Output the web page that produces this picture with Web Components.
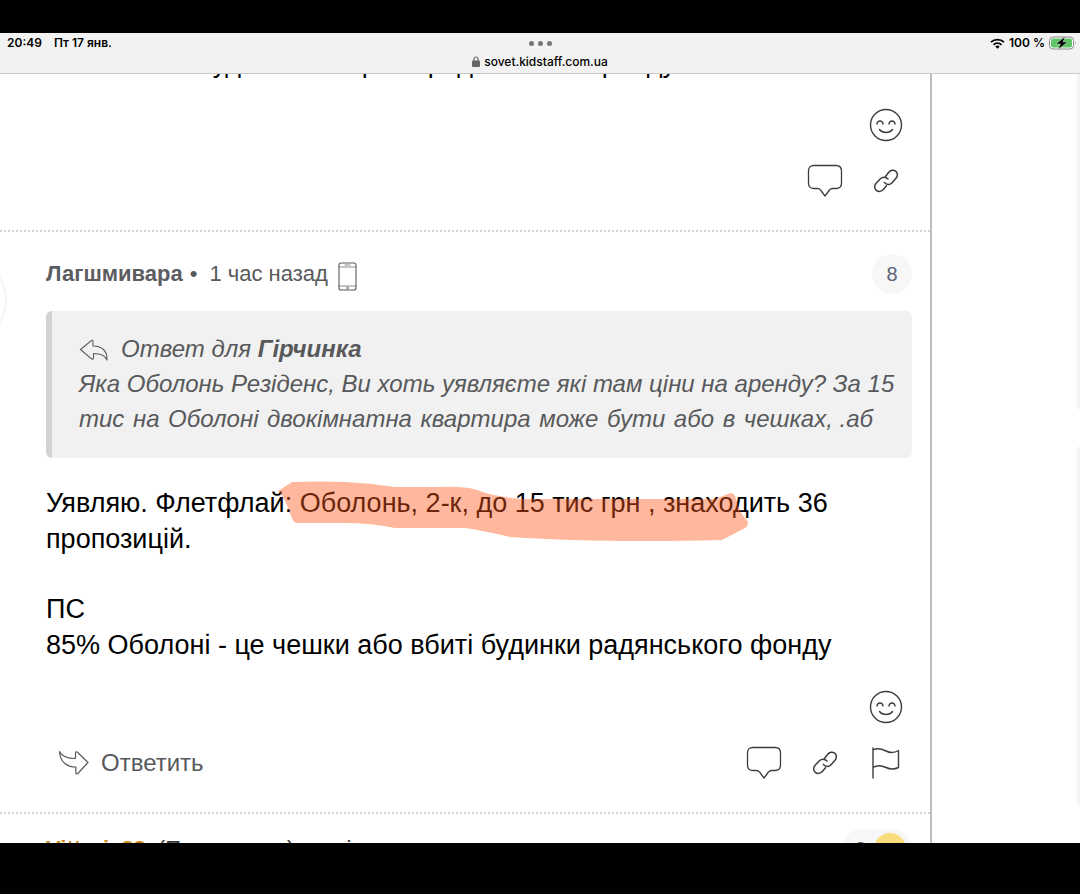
<!DOCTYPE html>
<html lang="uk">
<head>
<meta charset="utf-8">
<meta name="viewport" content="width=device-width, initial-scale=1">
<title>sovet.kidstaff.com.ua</title>
<style>
  html, body { margin: 0; height: 100%; }
  body { background: #000; color: #000; font-family: "Liberation Sans", Arial, sans-serif; }
  .tail { display: inline-block; text-align-last: left; }
</style>
</head>
<body>
<tablet-screen>
  <status-bar slot="top" time="20:49" date="Пт 17 янв." host="sovet.kidstaff.com.ua" battery="100 %"></status-bar>
  <forum-comment class="scrolled">
    <p>Неможливо судити нам про середній чек в оренду</p>
    <comment-actions slot="actions"></comment-actions>
  </forum-comment>
  <forum-comment avatar>
    <comment-head slot="head" author="Лагшмивара" time="1 час назад" votes="8" mobile></comment-head>
    <reply-quote slot="quote" to="Гірчинка">
      <span>Яка Оболонь Резіденс, Ви хоть уявляєте які там ціни на аренду? За 15</span>
      <span>тис на Оболоні двокімнатна квартира може бути або в <span class="tail">чешках, .аб</span></span>
    </reply-quote>
    <p>Уявляю. Флетфлай: <marker-stroke>Оболонь, 2-к, до 15 тис грн , знаходить</marker-stroke> 36 пропозицій.</p>
    <p>ПС<br>85% Оболоні - це чешки або вбиті будинки радянського фонду</p>
    <comment-actions slot="actions" reply flag></comment-actions>
  </forum-comment>
  <forum-comment avatar compact>
    <comment-head slot="head" author="Vittoria88" extra="(Пнша назва) лоскі" votes="8" gold></comment-head>
  </forum-comment>
  <side-cards slot="side"></side-cards>
</tablet-screen>

<script>
const define = (name, render) => customElements.define(name, class extends HTMLElement {
  constructor() { super(); this.attachShadow({ mode: "open" }); }
  connectedCallback() { this.shadowRoot.innerHTML = render(this); }
});

const ICONS = {
  smile: [34, 34, `<circle cx="17" cy="17" r="15.5"/><path d="M8 16c.5-4 5.500-4 6 0M20 16c.5-4 5.500-4 6 0M10.500 21.500c3 4 10 4 13 0"/>`],
  bubble: [36, 34, `<path d="M7 1.500h22q5.500 0 5.500 5.500v12q0 5.500-5.500 5.500h-3.500q-2 0-3 1.500L18 32l-4.500-6q-1-1.500-3-1.500H7Q1.500 24.500 1.500 19V7Q1.500 1.500 7 1.500z" stroke-width="1.300"/>`],
  link: [28, 28, `<path d="M13.500 9.500 16.500 5.500c2-2.600 5-3 7.200-1.300s2.200 4.800.3 7l-4 4.600c-2.200 2.500-5.500 2.300-7.700-.4M14.500 18.800 11.500 22.300c-2 2.400-5 2.700-7.200 1s-2.200-4.800-.2-7l4.300-4.500c2.200-2.200 5.300-2.200 7.600.2" stroke-width="1.500"/>`],
  flag: [30, 34, `<path d="M2 2v30M2 4c4-2.500 8-1.500 13 1s9 1.500 12.500-.5v17c-4 2-8 2-12.500 0s-9-2.500-13 0"/>`],
  reply: [32, 26, `<path d="M1.500 1.500C4 7 9 8.500 17.500 8.500V3q.2-2 2-.8L30 12.500 19.800 23.500q-2 1-2-1V17C9 17 2 12 1.500 1.500z" stroke-width="1.200"/>`],
  back: [30, 24, `<path d="M28 21C26 16 22 14.500 14.500 14.500V19q-.3 2-2 .8L1.500 10.500 12 1.800q2-1.200 2 .8V7C22 7 28.500 11 28 21z" stroke-width="1.100"/>`],
  phone: [20, 30, `<rect x="1" y="1" width="17" height="27" rx="2" stroke-width="1.100"/><path d="M1 5h17M1 24h17M7 3h5" stroke-width=".7"/><circle cx="9.500" cy="26" r="1" stroke-width=".7"/>`]
};
const icon = n => { const [w, h, d] = ICONS[n];
  return `<svg width="${w}" height="${h}" viewBox="0 0 ${w} ${h}" fill="none" stroke="currentColor" stroke-width="1.400" stroke-linecap="round" stroke-linejoin="round" aria-hidden="true">${d}</svg>`; };

define("tablet-screen", () => `
  <style>
    :host { display: flex; flex-direction: column; height: 100vh; box-sizing: border-box; padding: 33px 0 51px; background: #000; }
    main { flex: 1; min-height: 0; overflow: hidden; display: grid; grid-template-columns: minmax(0, 1fr) 150px; background: #fff; }
    section { min-width: 0; overflow: hidden; }
    aside { border-left: 2px solid #bcbcbc; overflow: hidden; }
  </style>
  <slot name="top"></slot>
  <main><section><slot></slot></section><aside><slot name="side"></slot></aside></main>`);

define("status-bar", el => `
  <style>
    :host { display: grid; grid-template-columns: 1fr auto 1fr; height: 40px; background: #f2f2f2; border-bottom: 1px solid #cbcbcb; font: 500 12px/20px Inter, sans-serif; color: #000; }
    .left { display: flex; gap: 12px; padding-left: 7px; font-weight: 600; }
    .right { display: flex; justify-content: flex-end; align-items: center; gap: 4px; height: 20px; padding-right: 3px; font-weight: 600; }
    .mid { display: flex; flex-direction: column; align-items: center; }
    .dots { display: flex; align-items: center; gap: 4px; height: 20px; }
    .dots i { width: 5px; height: 5px; border-radius: 50%; background: #777; }
    a { display: flex; align-items: center; gap: 4px; line-height: 17px; color: inherit; text-decoration: none; }
  </style>
  <div class="left"><span>${el.getAttribute("time")}</span><span>${el.getAttribute("date")}</span></div>
  <div class="mid"><div class="dots"><i></i><i></i><i></i></div>
    <a href="#"><svg width="8" height="11" viewBox="0 0 8 11" aria-hidden="true"><rect y="4.500" width="8" height="6.500" rx="1" fill="#666"/><path d="M2 5V3a2 2 0 0 1 4 0v2" fill="none" stroke="#666" stroke-width="1.200"/></svg>${el.getAttribute("host")}</a></div>
  <div class="right">
    <svg width="15" height="11" viewBox="0 0 15 11" fill="none" stroke="#000" stroke-width="1.800" aria-hidden="true"><path d="M1 4.200a9.300 9.300 0 0 1 13 0M3.500 6.800a5.700 5.700 0 0 1 8 0"/><path d="M7.500 10.800 5.300 8.600a3.200 3.200 0 0 1 4.400 0z" fill="#000" stroke="none"/></svg>
    <span>${el.getAttribute("battery")}</span>
    <svg width="28" height="14" viewBox="0 0 28 14" aria-hidden="true"><rect x=".5" y="1" width="24" height="12" rx="3.500" fill="#fff" stroke="#888"/><rect x="2" y="2.500" width="21" height="9" rx="2" fill="#5fc466"/><path d="M26 5.500q1.500 1.500 0 3z" fill="#888"/><path d="M16 .5 7 8h4.500L9 13.500 18.500 6H14z" fill="#000" stroke="#e8f5e8" stroke-width=".4"/></svg>
  </div>`);

define("forum-comment", el => `
  <style>
    :host { display: block; position: relative; padding: 22px 18px 29px 46px; border-bottom: 2px dotted #d2d2d2; font-size: 27px; line-height: 36px; }
    :host(.scrolled) { margin-top: -29px; padding-top: 0; }
    :host([compact]) { padding-top: 15px; }
    .text { display: flex; flex-direction: column; gap: 34px; }
    ::slotted(p) { margin: 0; }
    ::slotted(reply-quote) { margin: 17px 0 27px; }
    ::slotted(comment-actions) { margin-top: 27px; }
    .avatar { position: absolute; left: -77px; top: 26px; width: 80px; height: 80px; border: 2px solid #f3f3f3; border-radius: 50%; }
    :host([compact]) .avatar { top: 10px; border-color: #ddd; }
  </style>
  ${el.hasAttribute("avatar") ? `<div class="avatar"></div>` : ""}
  <slot name="head"></slot><slot name="quote"></slot>
  <div class="text"><slot></slot></div>
  <slot name="actions"></slot>`);

define("comment-head", el => `
  <style>
    :host { display: flex; align-items: center; height: 40px; font-size: 22px; line-height: 36px; color: #58595b; }
    strong { color: #5c5d60; }
    .dot { margin: 0 12px 0 7px; }
    svg { margin-left: 10px; margin-top: 6px; }
    .extra { margin-left: 12px; color: #333; }
    .votes { margin-left: auto; display: flex; align-items: center; justify-content: center; width: 40px; height: 40px; border-radius: 20px; background: #f7f7f7; color: #5d6378; font-size: 20px; }
    :host([gold]) strong { color: #d18a1a; }
    :host([gold]) .votes { box-sizing: border-box; width: 70px; gap: 8px; justify-content: flex-end; padding-right: 6px; }
    .coin { width: 32px; height: 32px; border-radius: 50%; background: #f9dc7c; }
  </style>
  <strong>${el.getAttribute("author")}</strong>
  ${el.hasAttribute("time") ? `<span class="dot">•</span><span>${el.getAttribute("time")}</span>` : ""}
  ${el.hasAttribute("mobile") ? icon("phone") : ""}
  ${el.hasAttribute("extra") ? `<span class="extra">${el.getAttribute("extra")}</span>` : ""}
  <span class="votes">${el.getAttribute("votes")}${el.hasAttribute("gold") ? `<i class="coin"></i>` : ""}</span>`);

define("reply-quote", el => `
  <style>
    :host { display: block; padding: 20px 16px 22px 27px; border-left: 6px solid #d2d2d2; border-radius: 6px; background: #f1f1f1; color: #58595b; font-size: 24px; line-height: 35px; font-style: italic; }
    .to { display: flex; align-items: center; gap: 12px; }
    .to span { white-space: pre; }
    .to svg { margin-top: 4px; }
    ::slotted(span) { display: block; }
    ::slotted(span:last-of-type) { text-align-last: justify; padding-right: 23px; }
  </style>
  <div class="to">${icon("back")}<span>Ответ для <strong>${el.getAttribute("to")}</strong></span></div>
  <slot></slot>`);

define("marker-stroke", () => `
  <style>
    :host { position: relative; }
    svg { position: absolute; left: -23px; top: -7px; pointer-events: none; }
  </style>
  <slot></slot><svg width="472" height="62" viewBox="277 481 472 62" aria-hidden="true"><path d="M278 491 292 482Q320 481 345 482T395 487H440Q467 486 480 491T520 499H715L728 494Q733 491 735 496L738 505Q741 515 747 520 750 524 745 528L722 540Q600 543 510 537 480 530 465 528H395Q370 523 345 523H297Q293 523 290 513 286 500 278 491z" fill="rgba(255,86,24,.42)"/></svg>`);

define("comment-actions", el => `
  <style>
    :host { display: flex; flex-direction: column; gap: 20px; padding: 0 6px 0 12px; color: #3c3d40; }
    .row { display: flex; align-items: center; justify-content: flex-end; gap: 21px; height: 40px; }
    .row.top { height: 33px; }
    button { display: flex; align-items: center; justify-content: center; width: 40px; height: 100%; padding: 0; border: 0; background: none; color: inherit; font: inherit; }
    .reply { width: auto; margin-right: auto; gap: 11px; font-size: 24px; color: #58595b; }
  </style>
  <div class="row top"><button aria-label="Реакция">${icon("smile")}</button></div>
  <div class="row">
    ${el.hasAttribute("reply") ? `<button class="reply">${icon("reply")}Ответить</button>` : ""}
    <button aria-label="Комментарий">${icon("bubble")}</button>
    <button aria-label="Ссылка">${icon("link")}</button>
    ${el.hasAttribute("flag") ? `<button aria-label="Жалоба">${icon("flag")}</button>` : ""}
  </div>`);

define("side-cards", () => `
  <style>
    :host { display: grid; grid-template-rows: 335px 358px; gap: 38px; justify-items: end; }
    i { width: 3px; background: #f4f4f4; }
  </style>
  <i></i><i></i>`);
</script>
</body>
</html>
